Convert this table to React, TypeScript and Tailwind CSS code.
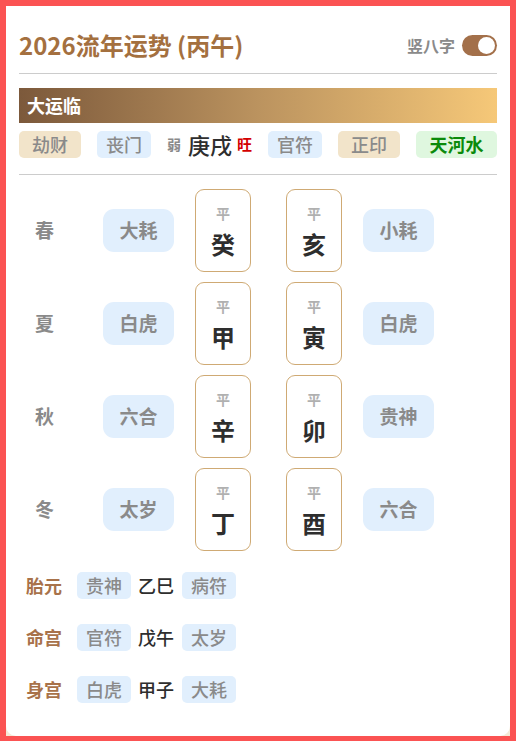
const font = { fontFamily: '"Noto Sans CJK SC", "Noto Sans", sans-serif' };

const topTags = [
  { text: "劫财", cls: "w-[62px] bg-[#f2e4ca] text-[#8a8a8a]" },
  { text: "丧门", cls: "w-[54px] bg-[#e1effd] text-[#8a8a8a]" },
];

const seasons = [
  { season: "春", left: "大耗", gan: "癸", zhi: "亥", right: "小耗" },
  { season: "夏", left: "白虎", gan: "甲", zhi: "寅", right: "白虎" },
  { season: "秋", left: "六合", gan: "辛", zhi: "卯", right: "贵神" },
  { season: "冬", left: "太岁", gan: "丁", zhi: "酉", right: "六合" },
];

const palaces = [
  { name: "胎元", a: "贵神", gz: "乙巳", b: "病符" },
  { name: "命宫", a: "官符", gz: "戊午", b: "太岁" },
  { name: "身宫", a: "白虎", gz: "甲子", b: "大耗" },
];

function Pillar({ ch }: { ch: string }) {
  return (
    <div className="h-[83px] w-[56px] rounded-[9px] border border-[#cfaa74] bg-white flex flex-col items-center">
      <span className="mt-[12px] text-[14px] leading-[22px] font-bold text-[#b0b0b0]">平</span>
      <span className="mt-[4px] text-[24px] leading-[32px] font-bold text-[#2e2e2e]">{ch}</span>
    </div>
  );
}

function BigTag({ text }: { text: string }) {
  return (
    <div className="h-[43px] w-[71px] rounded-[11px] bg-[#e1effd] flex items-center justify-center text-[19px] font-bold text-[#8a8a8a]">
      {text}
    </div>
  );
}

function SmallTag({ text }: { text: string }) {
  return (
    <div className="h-[27px] w-[54px] rounded-[5px] bg-[#e1effd] flex items-center justify-center text-[18px] font-medium text-[#8a8a8a]">
      {text}
    </div>
  );
}

export default function App() {
  return (
    <div style={font} className="h-[741px] w-[516px] border-[6px] border-b-[5px] border-[#fb5353] bg-[#f4ead8] overflow-hidden">
      <div className="h-full bg-white rounded-b-[10px] px-[13px] pt-[23px]">
        {/* header */}
        <div className="flex items-center justify-between h-[32px]">
          <h1 className="text-[24px] font-bold text-[#a4703f] leading-[32px]">2026流年运势 (丙午)</h1>
          <div className="flex items-center gap-[7px]">
            <span className="text-[16px] font-bold text-[#8a8a8a]">竖八字</span>
            <div className="h-[21px] w-[35px] rounded-full bg-[#a3704a] flex items-center justify-end pr-[2px]">
              <div className="h-[17px] w-[17px] rounded-full bg-white" />
            </div>
          </div>
        </div>
        <div className="mt-[12px] h-px bg-[#cccccc]" />

        {/* 大运临 */}
        <div className="mt-[14px] h-[35px] flex items-center pl-[8px] bg-gradient-to-r from-[#7c593b] via-[#bb935f] to-[#f6c878]">
          <span className="text-[18px] font-bold text-white">大运临</span>
        </div>
        <div className="mt-[8px] h-[27px] flex items-center justify-between">
          {topTags.map((t) => (
            <div key={t.text} className={`h-[27px] rounded-[5px] flex items-center justify-center text-[18px] font-medium ${t.cls}`}>
              {t.text}
            </div>
          ))}
          <div className="flex items-center">
            <span className="text-[14px] font-bold text-[#8a8a8a]">弱</span>
            <span className="ml-[7px] text-[22px] font-medium text-[#2e2e2e]">庚戌</span>
            <span className="ml-[5px] text-[15px] font-bold text-[#d40000]">旺</span>
          </div>
          <div className="h-[27px] w-[54px] rounded-[5px] bg-[#e1effd] flex items-center justify-center text-[18px] font-medium text-[#8a8a8a]">官符</div>
          <div className="h-[27px] w-[62px] rounded-[5px] bg-[#f2e4ca] flex items-center justify-center text-[18px] font-medium text-[#8a8a8a]">正印</div>
          <div className="h-[27px] w-[81px] rounded-[5px] bg-[#dff7df] flex items-center justify-center text-[18px] font-bold text-[#0b8a0b]">天河水</div>
        </div>
        <div className="mt-[16px] h-px bg-[#cccccc]" />

        {/* seasons */}
        <div className="mt-[14px] flex flex-col gap-[10px]">
          {seasons.map((s) => (
            <div key={s.season} className="grid grid-cols-[84px_71px_21px_56px_35px_56px_21px_71px] items-center">
              <span className="pl-[16px] text-[19px] font-bold text-[#8a8a8a]">{s.season}</span>
              <BigTag text={s.left} />
              <span />
              <Pillar ch={s.gan} />
              <span />
              <Pillar ch={s.zhi} />
              <span />
              <BigTag text={s.right} />
            </div>
          ))}
        </div>

        {/* palaces */}
        <div className="mt-[21px] flex flex-col gap-[25px]">
          {palaces.map((p) => (
            <div key={p.name} className="flex items-center h-[27px] pl-[7px]">
              <span className="w-[51px] text-[18px] font-bold text-[#a8724a]">{p.name}</span>
              <SmallTag text={p.a} />
              <span className="mx-[7px] w-[37px] text-[18px] font-medium text-[#2e2e2e]">{p.gz}</span>
              <SmallTag text={p.b} />
            </div>
          ))}
        </div>
      </div>
    </div>
  );
}
